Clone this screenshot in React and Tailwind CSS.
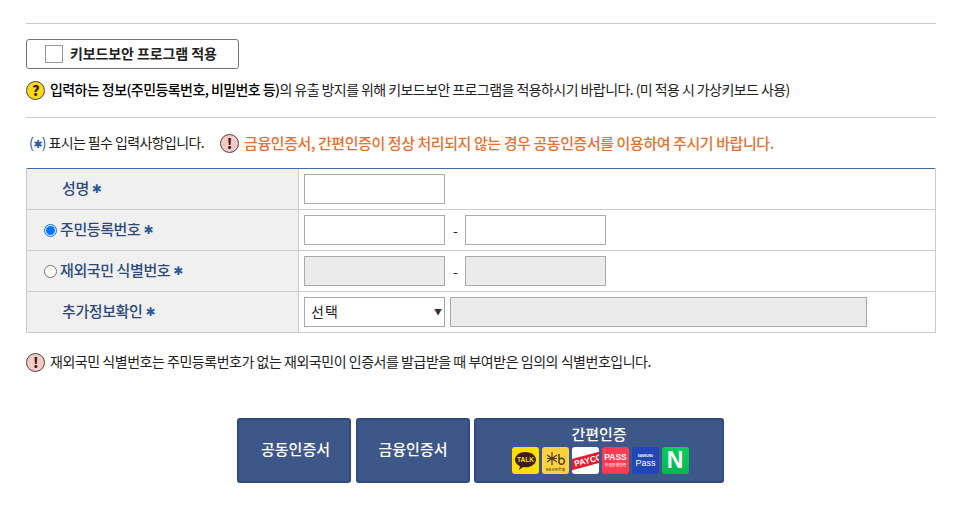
const font = '[font-family:"Noto_Sans_CJK_KR","Noto_Sans",sans-serif]'

function Star() {
  return <span className="ml-[3px] font-['DejaVu_Sans'] text-[12px] font-bold text-[#2a5a9e]">✱</span>
}

function Mark({ q }) {
  return (
    <span className={`flex h-[19px] w-[19px] shrink-0 items-center justify-center rounded-full border border-[#444] text-[14px] font-black leading-none text-[#222] ${q ? 'bg-[#ffd814]' : 'bg-[#fcc8c4]'}`}>
      {q ? '?' : '!'}
    </span>
  )
}

function Field({ disabled, className = 'w-[141px]' }) {
  return <div className={`h-[30px] border border-[#aaa] ${disabled ? 'bg-[#ebebeb]' : 'bg-white'} ${className}`} />
}

function Row({ label, children, radio }) {
  return (
    <div className="flex h-[41px] border-b border-[#ccc]">
      <div className={`flex w-[272px] shrink-0 items-center border-r border-[#ccc] bg-[#f0f0f0] pb-[1px] text-[15px] font-medium tracking-[-0.4px] text-[#2c4a7c] ${radio === undefined ? 'pl-[35px]' : 'pl-[17px]'}`}>
        {radio !== undefined && (
          <span className={`mr-[3px] mt-[1px] flex h-[13px] w-[13px] items-center justify-center rounded-full border ${radio ? 'border-[#0075ff]' : 'border-[#767676] bg-white'}`}>
            {radio && <span className="h-[9px] w-[9px] rounded-full bg-[#0075ff]" />}
          </span>
        )}
        {label}
        <Star />
      </div>
      <div className="flex flex-1 items-center pl-[5px]">{children}</div>
    </div>
  )
}

function Dash() {
  return <span className="mx-[8px] w-[4px] text-center text-[14px] text-[#222]">-</span>
}

function Logo({ className, children }) {
  return <div className={`flex h-[27px] w-[27px] items-center justify-center overflow-hidden rounded-[3px] ${className}`}>{children}</div>
}

function Logos() {
  return (
    <div className="ml-[2px] mt-[3px] flex gap-[3px]">
      <Logo className="bg-[#ffdf00]">
        <svg width="23" height="21" viewBox="0 0 23 21">
          <path d="M11.5 2C5.7 2 1 5.5 1 9.7c0 2.8 2 5.200 5 6.600l-1 3.700 4.300-2.900c.7.100 1.500.200 2.200.200 5.800 0 10.500-3.500 10.500-7.600S17.300 2 11.500 2z" fill="#3c1e1e" />
          <text x="11.500" y="12" textAnchor="middle" fontSize="6.500" fontWeight="700" fill="#ffdf00" fontFamily="Liberation Sans">TALK</text>
        </svg>
      </Logo>
      <Logo className="bg-[#fdd13f]">
        <svg width="25" height="25" viewBox="0 0 25 25">
          <path d="M9 4v13M4 7l10 7M14 7L4 14M4 10.500h10" stroke="#4a3a20" strokeWidth="1.200" />
          <path d="M16 6v9M16 11.500a3 3 0 1 1 0 3.500" stroke="#4a3a20" strokeWidth="1.500" fill="none" />
          <text x="12.500" y="23" textAnchor="middle" fontSize="3.800" fill="#4a3a20" fontFamily="Noto Sans CJK KR">KB국민은행</text>
        </svg>
      </Logo>
      <Logo className="bg-white">
        <svg width="27" height="27" viewBox="0 0 27 27">
          <g transform="rotate(-15 13.500 14)">
            <rect x="-3" y="8.500" width="34" height="11" fill="#e8192c" />
            <text x="2" y="17" fontSize="8.500" fontWeight="700" fill="#fff" fontFamily="Liberation Sans">PAYCO</text>
          </g>
        </svg>
      </Logo>
      <Logo className="bg-[#fb3c52]">
        <svg width="27" height="27" viewBox="0 0 27 27">
          <text x="13.500" y="13" textAnchor="middle" fontSize="8.500" fontWeight="700" fill="#fff" fontFamily="Liberation Sans">PASS</text>
          <text x="13.500" y="20" textAnchor="middle" fontSize="4" fill="#fff" fontFamily="Noto Sans CJK KR">우리은행인증</text>
        </svg>
      </Logo>
      <Logo className="bg-[#2146b8]">
        <svg width="27" height="27" viewBox="0 0 27 27">
          <text x="13.500" y="10" textAnchor="middle" fontSize="3" fontWeight="700" fill="#fff" fontFamily="Liberation Sans">SAMSUNG</text>
          <text x="13.500" y="19" textAnchor="middle" fontSize="9" fill="#fff" fontFamily="Liberation Sans">Pass</text>
        </svg>
      </Logo>
      <Logo className="bg-gradient-to-b from-[#03cf5d] to-[#03b654]">
        <span className="font-['Liberation_Sans'] text-[23px] font-bold leading-none text-white">N</span>
      </Logo>
    </div>
  )
}

function AuthButton({ className, children }) {
  return (
    <button className={`h-[65px] rounded-[3px] border-2 border-[#2e4a80] bg-[#3e5789] text-[15px] font-medium text-white ${className}`}>
      {children}
    </button>
  )
}

export default function App() {
  return (
    <div className={`h-[508px] w-[965px] overflow-hidden bg-white pl-[26px] pr-[29px] pt-[23px] text-[14px] text-[#222] ${font}`}>
      <div className="border-t border-[#ccc]" />

      <div className="mt-[15px] flex h-[30px] w-[213px] items-center rounded-[3px] border border-[#777] pl-[18px]">
        <span className="h-[18px] w-[18px] border border-[#999]" />
        <span className="ml-[7px] pb-[1px] text-[14px] font-bold tracking-[-0.1px]">키보드보안 프로그램 적용</span>
      </div>

      <div className="mt-[11px] flex h-[20px] items-center tracking-[-0.57px]">
        <Mark q />
        <p className="ml-[5px] whitespace-nowrap pb-[2px]">
          <span className="font-medium text-black">입력하는 정보(주민등록번호, 비밀번호 등)</span>의 유출 방지를 위해 키보드보안 프로그램을 적용하시기 바랍니다. (미 적용 시 가상키보드 사용)
        </p>
      </div>

      <div className="mt-[17px] border-t border-[#ccc]" />

      <div className="mt-[15px] flex h-[20px] items-center">
        <span className="ml-[3px] w-[191px] whitespace-nowrap tracking-[-0.6px]">
          <span className="text-[#2a5a9e]">(<span className="font-['DejaVu_Sans'] text-[11px] font-bold">✱</span>)</span> 표시는 필수 입력사항입니다.
        </span>
        <Mark />
        <span className="ml-[5px] whitespace-nowrap text-[15px] font-medium tracking-[-0.42px] text-[#e8702e]">
          금융인증서, 간편인증이 정상 처리되지 않는 경우 공동인증서를 이용하여 주시기 바랍니다.
        </span>
      </div>

      <div className="mt-[15px] border-x border-[#ccc]">
        <div className="border-t border-[#3a6ab0]" />
        <Row label="성명"><Field /></Row>
        <Row label="주민등록번호" radio={true}>
          <Field /><Dash /><Field />
        </Row>
        <Row label="재외국민 식별번호" radio={false}>
          <Field disabled /><Dash /><Field disabled />
        </Row>
        <Row label="추가정보확인">
          <div className="flex h-[30px] w-[141px] items-center justify-between border border-[#aaa] bg-white pl-[6px] pr-[2px] text-[14px]">
            <span className="pb-[1px] tracking-[1px]">선택</span>
            <span className="text-[8px] text-[#333]">▼</span>
          </div>
          <Field disabled className="ml-[5px] w-[417px]" />
        </Row>
      </div>

      <div className="mt-[19px] flex h-[20px] items-center tracking-[-0.47px]">
        <Mark />
        <p className="ml-[5px] whitespace-nowrap pb-[2px]">재외국민 식별번호는 주민등록번호가 없는 재외국민이 인증서를 발급받을 때 부여받은 임의의 식별번호입니다.</p>
      </div>

      <div className="mt-[46px] flex justify-center gap-[4px] pr-[1px]">
        <AuthButton className="mr-[1px] w-[114px] pb-[2px] pl-[3px]">공동인증서</AuthButton>
        <AuthButton className="w-[114px] pb-[2px]">금융인증서</AuthButton>
        <AuthButton className="flex w-[250px] flex-col items-center justify-start pt-[4px]">
          <span className="leading-[20px]">간편인증</span>
          <Logos />
        </AuthButton>
      </div>
    </div>
  )
}
